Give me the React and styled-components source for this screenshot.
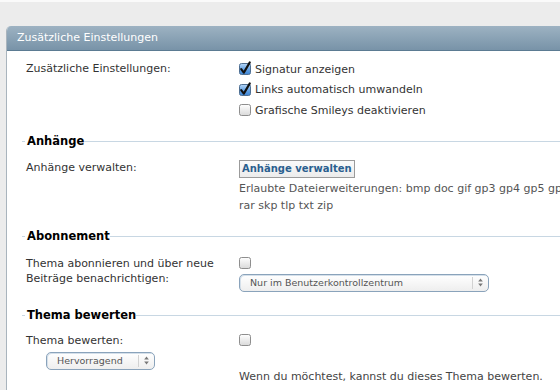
import React from 'react';
import styled, { createGlobalStyle } from 'styled-components';

const GlobalStyle = createGlobalStyle`
  html, body {
    margin: 0;
    padding: 0;
    background: #ececec;
  }
  body {
    font-family: 'DejaVu Sans', Verdana, sans-serif;
    overflow: hidden;
  }
`;

const Checkbox = ({ checked }) => (
  <CheckIcon width="12" height="12" viewBox="0 0 12 12">
    <defs>
      <linearGradient id="cb-off" x1="0" y1="0" x2="0" y2="1">
        <stop offset="0" stopColor="#ffffff" />
        <stop offset="1" stopColor="#d9d9d9" />
      </linearGradient>
      <linearGradient id="cb-on" x1="0" y1="0" x2="0" y2="1">
        <stop offset="0" stopColor="#b9d8f7" />
        <stop offset="0.5" stopColor="#6aa6e6" />
        <stop offset="1" stopColor="#3c84d4" />
      </linearGradient>
    </defs>
    <rect
      x="0.5"
      y="0.5"
      width="11"
      height="11"
      rx="2"
      fill={checked ? 'url(#cb-on)' : 'url(#cb-off)'}
      stroke={checked ? '#4f6f92' : '#8e8e8e'}
    />
    {checked && (
      <path d="M2.2 6.2 L4.8 9.6 L10.8 -0.6" fill="none" stroke="#111" strokeWidth="2.1" strokeLinecap="round" strokeLinejoin="round" />
    )}
  </CheckIcon>
);

const Select = ({ width, children }) => (
  <SelectBox $w={width}>
    <SelectText>{children}</SelectText>
    <SelectArrows>
      <svg width="5" height="9" viewBox="0 0 5 9">
        <path d="M2.5 0.5 L4.8 3.5 L0.2 3.5 Z" fill="#777" />
        <path d="M2.5 8.5 L4.8 5.5 L0.2 5.5 Z" fill="#777" />
      </svg>
    </SelectArrows>
  </SelectBox>
);

const App = () => {
  return (
    <>
      <GlobalStyle />
      <Page>
        <TopStrip />
        <Wrapper>
          <Panel>
            <PanelHeader>Zusätzliche Einstellungen</PanelHeader>
            <PanelBody>
              <Row>
                <Label $lh={20.5}>Zusätzliche Einstellungen:</Label>
                <Value>
                  <Option>
                    <Checkbox checked />
                    Signatur anzeigen
                  </Option>
                  <Option>
                    <Checkbox checked />
                    Links automatisch umwandeln
                  </Option>
                  <Option>
                    <Checkbox />
                    Grafische Smileys deaktivieren
                  </Option>
                </Value>
              </Row>

              <SectionTitle $top={13}>Anhänge</SectionTitle>
              <Row $top={11}>
                <Label>Anhänge verwalten:</Label>
                <Value>
                  <ManageButton>Anhänge verwalten</ManageButton>
                  <Hint>
                    Erlaubte Dateierweiterungen: bmp doc gif gp3 gp4 gp5 gpx
                    <br />
                    rar skp tlp txt zip
                  </Hint>
                </Value>
              </Row>

              <SectionTitle $top={15}>Abonnement</SectionTitle>
              <Row $top={12}>
                <Label>
                  Thema abonnieren und über neue
                  <br />
                  Beiträge benachrichtigen:
                </Label>
                <Value>
                  <BoxLine>
                    <Checkbox />
                  </BoxLine>
                  <SelectSlot $top={3}>
                    <Select width={250}>Nur im Benutzerkontrollzentrum</Select>
                  </SelectSlot>
                </Value>
              </Row>

              <SectionTitle $top={16}>Thema bewerten</SectionTitle>
              <Row $top={10}>
                <div>
                  <Label>Thema bewerten:</Label>
                  <SelectSlot $top={4} $left={20}>
                    <Select width={109}>Hervorragend</Select>
                  </SelectSlot>
                </div>
                <Value>
                  <BoxLine>
                    <Checkbox />
                  </BoxLine>
                  <Note>Wenn du möchtest, kannst du dieses Thema bewerten.</Note>
                </Value>
              </Row>
            </PanelBody>
          </Panel>
        </Wrapper>
      </Page>
    </>
  );
};

export default App;

const Page = styled.div`
  width: 560px;
  height: 390px;
  overflow: hidden;
  background: #ececec;
`;

const TopStrip = styled.div`
  height: 2px;
  background: #fafafa;
`;

const Wrapper = styled.div`
  padding: 24px 0 0 6px;
`;

const Panel = styled.section`
  width: 620px;
  min-height: 400px;
  background: #fff;
  border-left: 1px solid #a9b4bd;
  border-top-left-radius: 5px;
  overflow: hidden;
`;

const PanelHeader = styled.div`
  height: 24px;
  line-height: 24px;
  padding-left: 10px;
  font-size: 11px;
  color: #fff;
  background: linear-gradient(#9db2c2, #7893a8);
  border-bottom: 1px solid #5b7b92;
`;

const PanelBody = styled.div`
  padding-top: 8px;
  color: #333;
  font-size: 11px;
`;

const Row = styled.div`
  display: grid;
  grid-template-columns: 213px 1fr;
  padding-left: 19px;
  margin-top: ${p => p.$top || 0}px;
`;

const Label = styled.div`
  line-height: ${p => p.$lh || 15}px;
`;

const Value = styled.div`
  display: flex;
  flex-direction: column;
  align-items: flex-start;
`;

const Option = styled.label`
  display: flex;
  align-items: center;
  gap: 4px;
  height: 20.5px;
  white-space: nowrap;
`;

const CheckIcon = styled.svg`
  display: block;
  flex-shrink: 0;
  overflow: visible;
`;

const BoxLine = styled.div`
  height: 15px;
  display: flex;
  align-items: center;
`;

const SectionTitle = styled.div`
  display: flex;
  align-items: center;
  margin: ${p => p.$top || 0}px 0 0 15px;
  font-size: 11.5px;
  font-weight: bold;
  line-height: 15px;
  color: #000;

  &::before,
  &::after {
    content: '';
    height: 1px;
    background: #c8d7e3;
  }
  &::before {
    width: 3px;
    margin-right: 2px;
  }
  &::after {
    flex: 1;
  }
`;

const ManageButton = styled.button`
  height: 18px;
  padding: 0 2px;
  border: 1px solid #9b9b9b;
  background: linear-gradient(#fafafa, #ececec);
  color: #2a5f8f;
  font-family: 'DejaVu Sans', Verdana, sans-serif;
  font-size: 10px;
  font-weight: bold;
  line-height: 16px;
  cursor: pointer;
`;

const Hint = styled.div`
  margin-top: 2px;
  line-height: 17px;
  color: #555;
  white-space: nowrap;
`;

const Note = styled.div`
  margin-top: 21px;
  line-height: 15px;
  color: #444;
  white-space: nowrap;
`;

const SelectSlot = styled.div`
  margin-top: ${p => p.$top || 0}px;
  margin-left: ${p => p.$left || 0}px;
`;

const SelectBox = styled.div`
  display: flex;
  align-items: center;
  box-sizing: border-box;
  width: ${p => p.$w}px;
  height: 18px;
  border: 1px solid #8aa3bb;
  border-radius: 5px;
  background: linear-gradient(#ffffff, #eeeeee);
  box-shadow: inset 1px 1px 0 #d5e0ea;
  font-size: 9.5px;
  color: #555;
`;

const SelectText = styled.span`
  flex: 1;
  padding-left: 10px;
  white-space: nowrap;
`;

const SelectArrows = styled.span`
  display: flex;
  align-items: center;
  justify-content: center;
  width: 15px;
  height: 12px;
  border-left: 1px solid #d2d2d2;
`;
